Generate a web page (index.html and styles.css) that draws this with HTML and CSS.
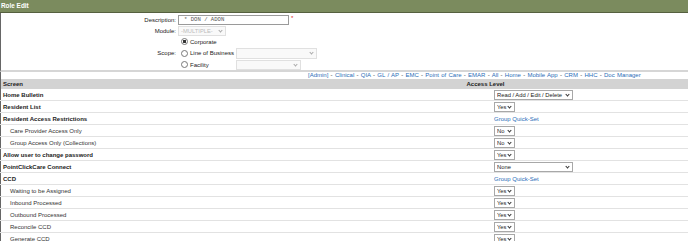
FILE: index.html
```html
<!DOCTYPE html>
<html lang="en">
<head>
  <meta charset="UTF-8" />
  <title>Role Edit</title>
  <link rel="stylesheet" href="styles.css">
</head>
<body>
  <div class="page">
    <div class="titlebar">Role Edit</div>

    <div class="role-form">
      <div class="lbl">Description:</div>
      <div class="fld">
        <input type="text" class="desc" value="* DON / ADON">
        <span class="req">*</span>
      </div>

      <div class="lbl">Module:</div>
      <div class="fld">
        <span class="selbox off"><select class="sel sel-module" disabled><option>-MULTIPLE-</option></select></span>
      </div>

      <div class="lbl"></div>
      <div class="fld">
        <label class="opt"><input type="radio" name="scope" checked><span class="opt-text">Corporate</span></label>
      </div>

      <div class="lbl">Scope:</div>
      <div class="fld">
        <label class="opt"><input type="radio" name="scope"><span class="opt-text">Line of Business</span></label>
        <span class="selbox off"><select class="sel sel-lob" disabled><option></option></select></span>
      </div>

      <div class="lbl"></div>
      <div class="fld">
        <label class="opt"><input type="radio" name="scope"><span class="opt-text">Facility</span></label>
        <span class="selbox off"><select class="sel sel-fac" disabled><option></option></select></span>
      </div>
    </div>

    <div class="modules">
      <a href="#">[Admin]</a> - <a href="#">Clinical</a> - <a href="#">QIA</a> - <a href="#">GL / AP</a> - <a href="#">EMC</a> - <a href="#">Point of Care</a> - <a href="#">EMAR</a> - <a href="#">All</a> - <a href="#">Home</a> - <a href="#">Mobile App</a> - <a href="#">CRM</a> - <a href="#">HHC</a> - <a href="#">Doc Manager</a>
    </div>

    <table class="perms">
      <tr class="head">
        <th class="c-screen">Screen</th>
        <th class="c-level" colspan="2">Access Level</th>
      </tr>
      <tr class="grp">
        <td>Home Bulletin</td><td class="gap"></td>
        <td><span class="selbox"><select class="sel sel-wide"><option>Read / Add / Edit / Delete</option></select></span></td>
      </tr>
      <tr class="grp">
        <td>Resident List</td><td class="gap"></td>
        <td><span class="selbox"><select class="sel sel-yn"><option>Yes</option><option>No</option></select></span></td>
      </tr>
      <tr class="grp">
        <td>Resident Access Restrictions</td><td class="gap"></td>
        <td><a href="#">Group Quick-Set</a></td>
      </tr>
      <tr class="sub">
        <td>Care Provider Access Only</td><td class="gap"></td>
        <td><span class="selbox"><select class="sel sel-yn"><option>No</option><option>Yes</option></select></span></td>
      </tr>
      <tr class="sub">
        <td>Group Access Only (Collections)</td><td class="gap"></td>
        <td><span class="selbox"><select class="sel sel-yn"><option>No</option><option>Yes</option></select></span></td>
      </tr>
      <tr class="grp">
        <td>Allow user to change password</td><td class="gap"></td>
        <td><span class="selbox"><select class="sel sel-yn"><option>Yes</option><option>No</option></select></span></td>
      </tr>
      <tr class="grp">
        <td>PointClickCare Connect</td><td class="gap"></td>
        <td><span class="selbox"><select class="sel sel-wide"><option>None</option></select></span></td>
      </tr>
      <tr class="grp">
        <td>CCD</td><td class="gap"></td>
        <td><a href="#">Group Quick-Set</a></td>
      </tr>
      <tr class="sub">
        <td>Waiting to be Assigned</td><td class="gap"></td>
        <td><span class="selbox"><select class="sel sel-yn"><option>Yes</option><option>No</option></select></span></td>
      </tr>
      <tr class="sub">
        <td>Inbound Processed</td><td class="gap"></td>
        <td><span class="selbox"><select class="sel sel-yn"><option>Yes</option><option>No</option></select></span></td>
      </tr>
      <tr class="sub">
        <td>Outbound Processed</td><td class="gap"></td>
        <td><span class="selbox"><select class="sel sel-yn"><option>Yes</option><option>No</option></select></span></td>
      </tr>
      <tr class="sub">
        <td>Reconcile CCD</td><td class="gap"></td>
        <td><span class="selbox"><select class="sel sel-yn"><option>Yes</option><option>No</option></select></span></td>
      </tr>
      <tr class="sub">
        <td>Generate CCD</td><td class="gap"></td>
        <td><span class="selbox"><select class="sel sel-yn"><option>Yes</option><option>No</option></select></span></td>
      </tr>
    </table>
  </div>
</body>
</html>
```

FILE: styles.css
```css
body {
  margin: 0;
  padding: 0;
  font-family: "Liberation Sans", Arial, sans-serif;
  font-size: 6px;
  color: #222;
  background: #fff;
  overflow: hidden;
}

.page {
  width: 688px;
}

.titlebar {
  height: 12px;
  line-height: 12px;
  background-color: #7b8b5e;
  color: #fff;
  font-weight: bold;
  font-size: 6.4px;
  padding-left: 1px;
  border-bottom: 1px solid #55603f;
}

/* Formulaire du haut */
.role-form {
  display: grid;
  grid-template-columns: 177px 1fr;
  grid-template-rows: 11px 11px 11px 12px 11px;
  padding-top: 1px;
  border-left: 1px solid #666;
  border-bottom: 2px solid #d6d6d6;
}

.lbl {
  display: flex;
  align-items: center;
  justify-content: flex-end;
  padding-right: 2px;
}

.fld {
  display: flex;
  align-items: center;
}

.desc {
  box-sizing: border-box;
  width: 111px;
  height: 10px;
  padding: 0 0 0 5px;
  border: 1px solid #9a9a9a;
  font-family: "Liberation Mono", monospace;
  font-size: 5.6px;
  color: #555;
  outline: none;
}

.req {
  color: #e02020;
  font-size: 6px;
  align-self: flex-start;
  margin-left: 2px;
  margin-top: 1px;
}

/* Listes déroulantes */
.selbox {
  position: relative;
  display: inline-block;
  line-height: 0;
}

.selbox::after {
  content: "";
  position: absolute;
  right: 4px;
  top: 3px;
  width: 2px;
  height: 2px;
  border-right: 1px solid #333;
  border-bottom: 1px solid #333;
  transform: rotate(45deg);
  pointer-events: none;
}

.selbox.off::after {
  border-color: #aaa;
}

.sel {
  -webkit-appearance: none;
  appearance: none;
  box-sizing: border-box;
  height: 10px;
  margin: 0;
  padding: 0 0 0 2px;
  font-family: "Liberation Sans", Arial, sans-serif;
  font-size: 5.8px;
  border: 1px solid #a8a8a8;
  border-radius: 0;
  background: #fff;
  color: #222;
  outline: none;
}

.sel:disabled {
  color: #a0a0a0;
  border-color: #d4d4d4;
  background: #f7f7f7;
}

.sel-module { width: 48px; }
.sel-lob { width: 81px; height: 11px; }
.sel-fac { width: 65px; }
.sel-wide { width: 79px; }
.sel-yn { width: 21px; }

/* Boutons radio */
.opt {
  display: flex;
  align-items: center;
  width: 58px;
}

.opt input {
  -webkit-appearance: none;
  appearance: none;
  box-sizing: border-box;
  width: 7px;
  height: 7px;
  margin: 0 2px 0 3px;
  border: 1px solid #777;
  border-radius: 50%;
  background: #fff;
}

.opt input:checked {
  background: radial-gradient(circle, #333 0, #333 1.4px, #fff 1.8px);
}

.opt-text {
  white-space: nowrap;
}

/* Liens des modules */
.modules {
  height: 7px;
  line-height: 7px;
  padding-left: 307px;
  border-left: 1px solid #666;
  white-space: nowrap;
  color: #333;
  font-size: 6px;
  word-spacing: 0.6px;
}

a {
  color: #2a6db8;
  text-decoration: none;
}

/* Tableau des accès */
.perms {
  border-collapse: collapse;
  width: 688px;
  border-left: 1px solid #666;
}

.perms th {
  background-color: #d3d3d3;
  height: 10px;
  padding: 0;
  font-weight: bold;
}

.perms .c-screen {
  text-align: left;
  padding-left: 2px;
  width: 280px;
}

.perms .c-level {
  text-align: center;
}

.perms td {
  height: 11px;
  padding: 0;
  border-bottom: 1px solid #e2e2e2;
  vertical-align: middle;
  white-space: nowrap;
}

.perms td.gap {
  width: 211px;
}

.grp td:first-child {
  font-weight: bold;
  padding-left: 2px;
}

.sub td:first-child {
  padding-left: 9px;
  color: #333;
}
```
